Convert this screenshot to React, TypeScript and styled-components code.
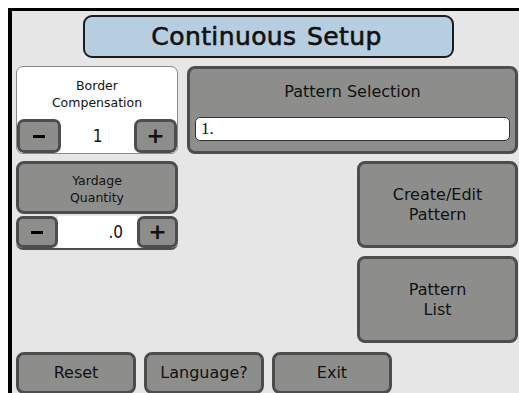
import styled, { createGlobalStyle } from 'styled-components';

const GlobalStyle = createGlobalStyle`
  html, body {
    overflow: hidden;
  }
  body {
    margin: 8px 0 0 8px;
    background: #ffffff;
  }
`;

const Screen = styled.div`
  box-sizing: border-box;
  width: 516px;
  height: 390px;
  background: #e6e6e6;
  border-top: 3px solid #000;
  border-left: 4px solid #000;
  padding: 4px 0 0 4px;
  display: flex;
  flex-direction: column;
  font-family: 'DejaVu Sans', 'Liberation Sans', sans-serif;
  color: #111;
  overflow: hidden;
`;

const TitleBar = styled.div`
  box-sizing: border-box;
  align-self: flex-start;
  margin-left: 67px;
  width: 371px;
  height: 43px;
  background: #b7cde0;
  border: 2px solid #1c1c1c;
  border-radius: 9px;
  display: flex;
  align-items: center;
  justify-content: center;
  padding-right: 4px;
  font-size: 25px;
  font-weight: normal;
  letter-spacing: 0.4px;
  word-spacing: 2px;
  -webkit-text-stroke: 0.6px #111;
`;

const Row = styled.div<{ $top: number }>`
  display: flex;
  gap: 9px;
  margin-top: ${(p) => p.$top}px;
  width: 502px;
`;

const Panel = styled.div`
  box-sizing: border-box;
  width: 162px;
  height: 88px;
  background: #fff;
  border: 1px solid #8a8a8a;
  border-radius: 7px;
  display: flex;
  flex-direction: column;
  overflow: hidden;
`;

const PanelLabel = styled.div`
  flex: 1;
  display: flex;
  align-items: center;
  justify-content: center;
  text-align: center;
  font-size: 12.5px;
  line-height: 17px;
  padding-top: 2px;
`;

const StepRow = styled.div`
  display: flex;
  height: 34px;
  align-items: stretch;
`;

const StepButton = styled.div<{ $w: number }>`
  box-sizing: border-box;
  width: ${(p) => p.$w}px;
  background: #8d8e8b;
  border: 3px solid #4d4d4d;
  border-radius: 7px;
  display: flex;
  align-items: center;
  justify-content: center;
  font-size: 22px;
  font-weight: bold;
  line-height: 1;
`;

const Minus = styled.span`
  display: block;
  width: 12px;
  height: 3px;
  background: #000;
`;

const StepValue = styled.div<{ $align: string; $pad: number }>`
  flex: 1;
  background: #fff;
  display: flex;
  align-items: center;
  justify-content: ${(p) => p.$align};
  padding-right: ${(p) => p.$pad}px;
  font-size: 17px;
  font-stretch: condensed;
`;

const GrayButton = styled.div<{ $w?: number; $h: number }>`
  box-sizing: border-box;
  flex: none;
  width: ${(p) => (p.$w ? `${p.$w}px` : '100%')};
  height: ${(p) => p.$h}px;
  background: #8d8e8b;
  border: 3px solid #4d4d4d;
  border-radius: 8px;
  display: flex;
  flex-direction: column;
  align-items: center;
  justify-content: center;
  text-align: center;
  font-size: 16px;
  line-height: 20px;
`;

const SelectionPanel = styled(GrayButton)`
  flex: 1;
  justify-content: flex-start;
  padding: 13px 5px 0;
`;

const SelectionField = styled.div`
  box-sizing: border-box;
  margin-top: 15px;
  width: 100%;
  height: 24px;
  background: #fff;
  border: 1.5px solid #333;
  border-radius: 5px;
  text-align: left;
  padding-left: 5px;
  font-family: 'Liberation Serif', serif;
  font-size: 17px;
  line-height: 21px;
`;

const YardageBox = styled.div`
  box-sizing: border-box;
  width: 162px;
  display: flex;
  flex-direction: column;
`;

const YardageLabel = styled(GrayButton)`
  font-size: 12.5px;
  line-height: 17px;
  padding-top: 2px;
`;

const YardageSteps = styled(StepRow)`
  margin-top: 2px;
  height: 32px;
  border-bottom: 2px solid #4d4d4d;
  border-radius: 0 0 7px 7px;
`;

const Spacer = styled.div`
  flex: 1;
`;

const RightColumn = styled.div`
  display: flex;
  flex-direction: column;
  gap: 8px;
  width: 161px;
`;

const BottomRow = styled.div`
  display: flex;
  gap: 8px;
  margin-top: 9px;
`;

export default function App() {
  return (
    <>
      <GlobalStyle />
      <Screen>
        <TitleBar>Continuous Setup</TitleBar>
        <Row $top={8}>
          <Panel>
            <PanelLabel>
              Border
              <br />
              Compensation
            </PanelLabel>
            <StepRow>
              <StepButton $w={44}>
                <Minus />
              </StepButton>
              <StepValue $align="center" $pad={0}>
                1
              </StepValue>
              <StepButton $w={43}>+</StepButton>
            </StepRow>
          </Panel>
          <SelectionPanel $h={88}>
            Pattern Selection
            <SelectionField>1.</SelectionField>
          </SelectionPanel>
        </Row>
        <Row $top={7}>
          <YardageBox>
            <YardageLabel $h={53}>
              Yardage
              <br />
              Quantity
            </YardageLabel>
            <YardageSteps>
              <StepButton $w={42}>
                <Minus />
              </StepButton>
              <StepValue $align="flex-end" $pad={14}>
                .0
              </StepValue>
              <StepButton $w={41}>+</StepButton>
            </YardageSteps>
          </YardageBox>
          <Spacer />
          <RightColumn>
            <GrayButton $h={87}>
              Create/Edit
              <br />
              Pattern
            </GrayButton>
            <GrayButton $h={87}>
              Pattern
              <br />
              List
            </GrayButton>
          </RightColumn>
        </Row>
        <BottomRow>
          <GrayButton $w={120} $h={42}>Reset</GrayButton>
          <GrayButton $w={120} $h={42}>Language?</GrayButton>
          <GrayButton $w={120} $h={42}>Exit</GrayButton>
        </BottomRow>
      </Screen>
    </>
  );
}
